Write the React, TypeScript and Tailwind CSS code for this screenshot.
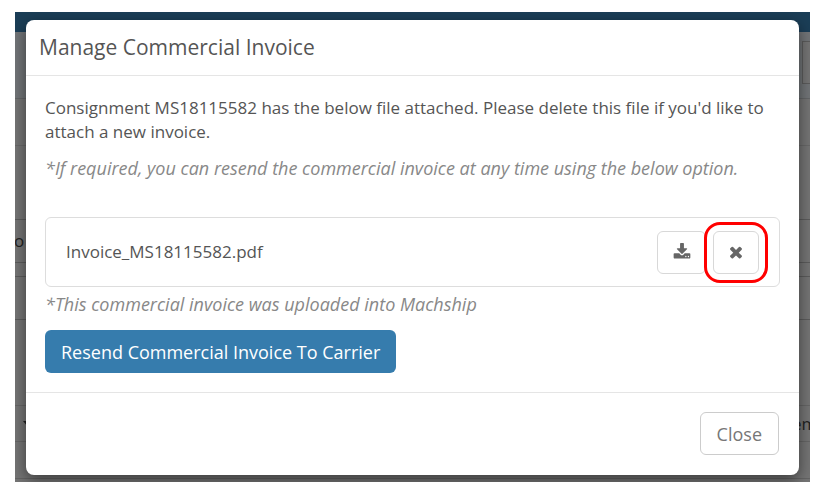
import React from "react";

const iconPaths = {
  download:
    "M1344 1344q0-26-19-45t-45-19-45 19-19 45 19 45 45 19 45-19 19-45zm256 0q0-26-19-45t-45-19-45 19-19 45 19 45 45 19 45-19 19-45zm128-224v320q0 40-28 68t-68 28h-1472q-40 0-68-28t-28-68v-320q0-40 28-68t68-28h465l135 136q58 56 136 56t136-56l136-136h464q40 0 68 28t28 68zm-325-569q17 41-14 70l-448 448q-18 19-45 19t-45-19l-448-448q-31-29-14-70 17-39 59-39h256v-448q0-26 19-45t45-19h256q26 0 45 19t19 45v448h256q42 0 59 39z",
  times:
    "M1490 1322q0 40-28 68l-136 136q-28 28-68 28t-68-28l-294-294-294 294q-28 28-68 28t-68-28l-136-136q-28-28-28-68t28-68l294-294-294-294q-28-28-28-68t28-68l136-136q28-28 68-28t68 28l294 294 294-294q28-28 68-28t68 28l136 136q28 28 28 68t-28 68l-294 294 294 294q28 28 28 68z",
};

const Icon = ({ name }: { name: keyof typeof iconPaths }) => (
  <svg viewBox="0 0 1792 1792" className="size-[18px]" fill="currentColor" aria-hidden="true">
    <path d={iconPaths[name]} />
  </svg>
);

// The dimmed page behind the dialog
const PageBackdrop = () => (
  <div className="absolute inset-0 flex flex-col overflow-hidden bg-[#757575] text-[17px] text-[#222]" aria-hidden="true">
    <div className="h-5 shrink-0 bg-[#1b3e57]" />
    <div className="flex h-[67px] shrink-0 justify-end border-b border-[#646668] bg-[#727578] pt-[9px]">
      <div className="h-[43px] w-2 border-y border-l border-[#5c5c5c] bg-[#757575]" />
    </div>
    <div className="h-[47px] shrink-0 border-b border-[#696969]" />
    <div className="h-[74px] shrink-0 border-b border-[#5c5c5c]" />
    <div className="h-[43px] shrink-0 border-b border-[#5c5c5c]">
      <span className="-ml-px leading-[42px]">o</span>
    </div>
    <div className="h-[14px] shrink-0 border-b border-[#5c5c5c]" />
    <div className="h-[43px] shrink-0 border-b border-[#5c5c5c]" />
    <div className="h-[86px] shrink-0 border-b border-[#666]" />
    <div className="flex h-[36px] shrink-0 items-center justify-between border-b border-[#666] pl-2">
      <svg viewBox="0 0 10 6" className="h-[6px] w-[10px]" fill="currentColor">
        <path d="M0 0h10L5 6z" />
      </svg>
      <span className="w-[18px] leading-[34px]">em</span>
    </div>
    <div className="h-[37px] shrink-0 border-b border-[#646464]" />
  </div>
);

export default function App() {
  return (
    <main className="bg-white pt-3 pr-[18px] pb-5 pl-[15px] font-['Open_Sans','Noto_Sans',sans-serif] text-[#555]">
      <div className="relative overflow-hidden pt-2 pr-[11px] pb-[7px] pl-[11px]">
        <PageBackdrop />

        <div
          role="dialog"
          aria-labelledby="dialog-title"
          className="relative rounded-lg bg-white shadow-[0_5px_15px_rgba(0,0,0,0.5)]"
        >
          <header className="border-b border-[#e5e5e5] px-[13px] py-[14px]">
            <h1 id="dialog-title" className="text-[21px] leading-[27px]">
              Manage Commercial Invoice
            </h1>
          </header>

          <div className="px-[19px] pt-5 pb-[19px]">
            <p className="text-[17px] leading-6">
              Consignment MS18115582 has the below file attached. Please delete this file if you'd like to
              attach a new invoice.
            </p>
            <p className="mt-3 text-lg leading-6 text-[#888] italic">
              *If required, you can resend the commercial invoice at any time using the below option.
            </p>

            <div className="mt-[37px] flex h-[70px] items-center justify-between rounded-md border border-[#ddd] pr-[11px] pl-5">
              <span className="text-[17px] leading-6">Invoice_MS18115582.pdf</span>
              <div className="flex items-center">
                <button
                  type="button"
                  aria-label="Download invoice"
                  className="flex h-[43px] w-[49px] items-center justify-center rounded-md border border-[#d8d8d8] text-[#666]"
                >
                  <Icon name="download" />
                </button>
                <div className="-ml-[2px] rounded-2xl border-3 border-[#f00] p-[6px]">
                  <button
                    type="button"
                    aria-label="Delete invoice"
                    className="flex h-[43px] w-[46px] items-center justify-center rounded-md border border-[#d8d8d8] text-[#666]"
                  >
                    <Icon name="times" />
                  </button>
                </div>
              </div>
            </div>

            <p className="mt-[5px] text-lg leading-6 text-[#888] italic">
              *This commercial invoice was uploaded into Machship
            </p>
            <button
              type="button"
              className="mt-[14px] h-[43px] rounded-md bg-[#367cad] px-4 text-lg leading-6 text-white"
            >
              Resend Commercial Invoice To Carrier
            </button>
          </div>

          <footer className="flex justify-end border-t border-[#e5e5e5] p-5 pt-[19px]">
            <button
              type="button"
              className="h-[43px] rounded-md border border-[#ccc] px-4 text-lg leading-6 text-[#777]"
            >
              Close
            </button>
          </footer>
        </div>
      </div>
    </main>
  );
}
